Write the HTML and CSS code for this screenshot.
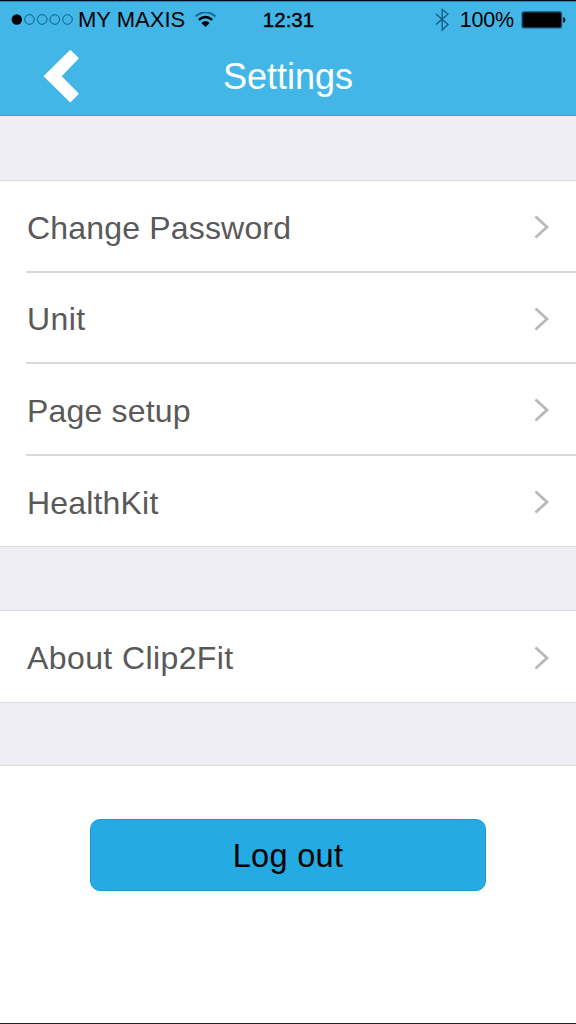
FILE: index.html
```html
<!DOCTYPE html>
<html lang="en">
<head>
<meta charset="utf-8">
<title>Settings</title>
<link rel="stylesheet" href="styles.css">
</head>
<body>
<div class="screen">
  <header class="header">
    <div class="status">
      <div class="status-left">
        <svg class="signal" width="62" height="14" viewBox="0 0 62 14">
          <circle cx="5.8" cy="6.5" r="5.2"/>
          <g fill="none" stroke="#10598a" stroke-width="1">
            <circle cx="18.5" cy="6.5" r="4.8"/><circle cx="31.2" cy="6.5" r="4.8"/>
            <circle cx="43.8" cy="6.5" r="4.8"/><circle cx="56.5" cy="6.5" r="4.8"/>
          </g>
        </svg>
        <span class="carrier">MY MAXIS</span>
        <svg class="wifi" width="22" height="17" viewBox="0 0 22 17" fill="none" stroke-width="2.4">
          <path d="M.5 4.4Q10.5-4 20.5 4.4" stroke="#176b96" stroke-width="2"/>
          <path d="M3.8 7.9Q10.5 2.1 17.2 7.9" stroke="#000"/>
          <path d="M6.4 11Q10.5 7.2 14.6 11L10.5 15Z" fill="#000"/>
        </svg>
      </div>
      <span class="clock">12:31</span>
      <div class="status-right">
        <svg class="bluetooth" width="15" height="24" viewBox="0 0 15 24" fill="none" stroke="#145f89" stroke-width="1.4">
          <path d="M2 6L14 16.5L8.2 22V1.5L14 6L2 16.5"/>
        </svg>
        <span class="percent">100%</span>
        <svg class="battery" width="45" height="19" viewBox="0 0 45 19">
          <rect x=".5" y=".2" width="40.7" height="17.2" rx="2.5" fill="#10567b"/>
          <rect x="1.7" y="1.4" width="38.3" height="14.8" rx="1.5"/>
          <path d="M42.2 6Q44.4 6.8 44.4 8.9T42.2 11.8Z"/>
        </svg>
      </div>
    </div>
    <div class="navbar">
      <svg class="back" width="37" height="54" viewBox="0 0 37 54" fill="#fff">
        <path d="M27.3 .8L36 9.3L18.7 27.2L36 44.8L27.3 53.6L.5 27.2Z"/>
      </svg>
      <h1 class="title">Settings</h1>
    </div>
  </header>
  <main class="content">
    <ul class="group">
      <li class="row"><span class="label">Change Password</span><svg class="chevron" viewBox="0 0 16 24"><path d="M1.5 1.5L13 12L1.5 22.5"/></svg></li>
      <li class="row"><span class="label unit">Unit</span><svg class="chevron" viewBox="0 0 16 24"><path d="M1.5 1.5L13 12L1.5 22.5"/></svg></li>
      <li class="row tall"><span class="label">Page setup</span><svg class="chevron" viewBox="0 0 16 24"><path d="M1.5 1.5L13 12L1.5 22.5"/></svg></li>
      <li class="row tall"><span class="label">HealthKit</span><svg class="chevron" viewBox="0 0 16 24"><path d="M1.5 1.5L13 12L1.5 22.5"/></svg></li>
    </ul>
    <ul class="group">
      <li class="row"><span class="label about">About Clip2Fit</span><svg class="chevron" viewBox="0 0 16 24"><path d="M1.5 1.5L13 12L1.5 22.5"/></svg></li>
    </ul>
  </main>
  <footer class="footer">
    <button class="logout">Log out</button>
  </footer>
</div>
</body>
</html>
```
FILE: styles.css
```css
* { box-sizing: border-box; }
body {
  margin: 0;
  font-family: "Liberation Sans", Arial, sans-serif;
  background: #fff;
}
svg { display: block; flex: none; }
.screen {
  width: 576px;
  height: 1024px;
  display: flex;
  flex-direction: column;
  border-top: 1px solid #020b12;
  border-bottom: 1px solid #222;
}
.header {
  height: 115px;
  background: #43b6e8;
  border-top: 1px solid #2585ae;
  border-bottom: 1px solid #35a3d3;
}
.status {
  height: 36px;
  display: grid;
  grid-template-columns: 1fr auto 1fr;
  align-items: center;
  padding: 0 10px 0 11px;
  font-size: 22px;
  line-height: 36px;
  color: #000;
}
.status-left, .status-right { display: flex; align-items: center; }
.status-right { justify-content: flex-end; }
.carrier { margin-left: 5px; }
.wifi { margin-left: 10px; }
.clock { font-size: 20.5px; -webkit-text-stroke: .4px #000; }
.bluetooth { margin-right: 11px; }
.percent { font-size: 21.5px; margin-right: 7px; letter-spacing: -.2px; }
.navbar {
  height: 74px;
  display: grid;
  grid-template-columns: 1fr auto 1fr;
  align-items: center;
  padding: 0 43px;
}
.title {
  margin: 0;
  padding-top: 2px;
  font-size: 36px;
  font-weight: 400;
  line-height: 74px;
  color: #fff;
}
.content {
  height: 650px;
  display: flex;
  flex-direction: column;
  gap: 63px;
  padding-top: 64px;
  background: #efeef5;
  border-bottom: 1px solid #e0dfe5;
}
.group {
  list-style: none;
  margin: 0;
  padding: 0 0 0 26px;
  background: #fff;
  border-top: 1px solid #dddce2;
  border-bottom: 1px solid #dddce2;
}
.row {
  height: 91px;
  display: flex;
  align-items: center;
  justify-content: space-between;
  padding: 3px 26px 0 1px;
}
.row:not(:last-child):first-child { height: 90px; }
.row + .row { border-top: 2px solid #d9d9db; }
.row.tall { height: 92px; }
.label {
  font-size: 32px;
  line-height: 40px;
  letter-spacing: .18px;
  color: #595959;
}
.unit { letter-spacing: .4px; }
.about { letter-spacing: .4px; }
.chevron {
  width: 16px;
  height: 24px;
  margin-bottom: 1px;
  fill: none;
  stroke: #b9b9bc;
  stroke-width: 2.8;
}
.footer {
  display: flex;
  justify-content: center;
  padding-top: 53px;
}
.logout {
  width: 396px;
  height: 72px;
  border: 1px solid #1c9bd0;
  border-radius: 10px;
  background: #24abe4;
  color: #000;
  font: 32.5px "Liberation Sans", Arial, sans-serif;
  letter-spacing: .3px;
  padding: 2px 0 0;
}
```
